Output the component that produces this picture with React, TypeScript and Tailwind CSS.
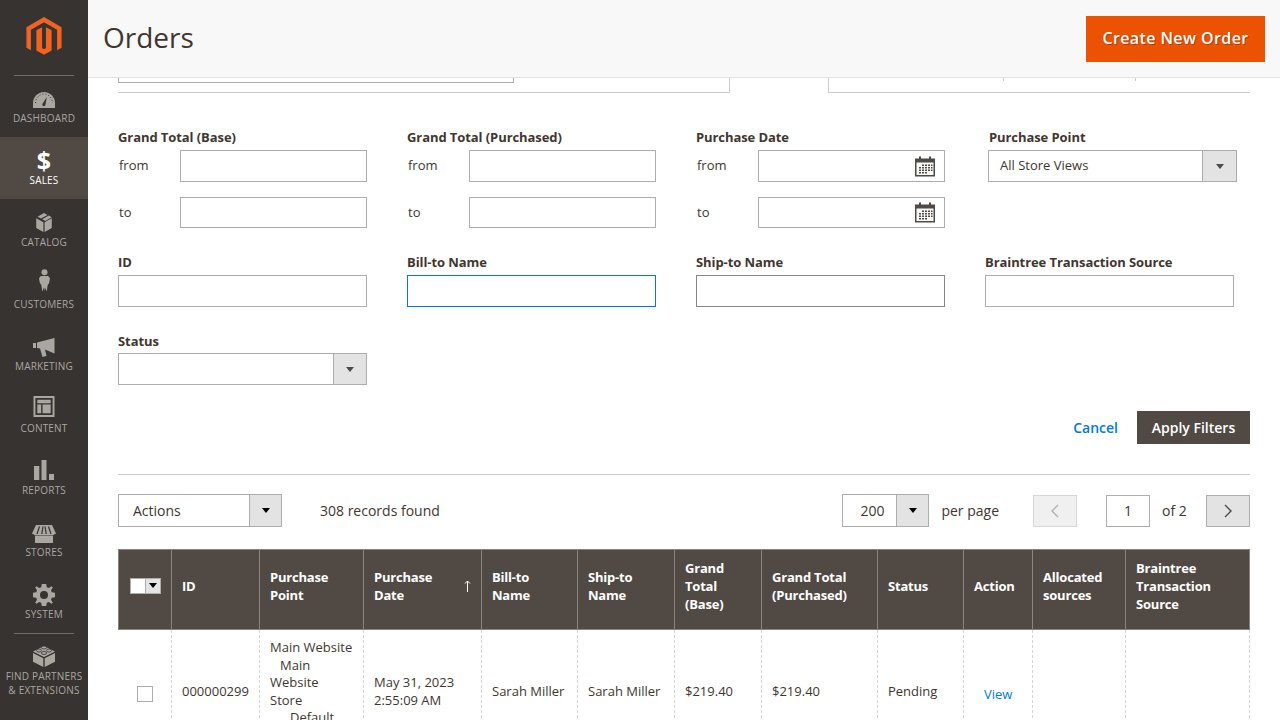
import React from "react";

const font = { fontFamily: '"Open Sans", sans-serif' };

const Logo = () => (
  <svg width="36" height="41" viewBox="0 0 36 42">
    <path
      fill="#f26322"
      d="M18 0 36 10.400V31.400L31.400 34V13L18 5.300 4.600 13V34L0 31.400V10.400ZM20 10.500 25.800 13.600V34.200L18 38.700 10.200 34.200V13.600L16 10.500V31.800L18 33 20 31.800Z"
    />
  </svg>
);

const navIcons: Record<string, React.ReactNode> = {
  DASHBOARD: (
    <svg width="22" height="16" viewBox="0 0 22 16">
      <path
        fill="currentColor"
        d="M11 0C4.800 0 0 5 0 11V16H22V11C22 5 17.200 0 11 0Z"
      />
      <path
        stroke="#373330"
        strokeWidth="1"
        strokeDasharray="1 2"
        fill="none"
        d="M2.500 11C2.500 6 6.500 2 11 2S19.500 6 19.500 11"
      />
      <path
        fill="#373330"
        d="M9.700 11.500 13.800 5 12.500 12.500A1.600 1.600 0 1 1 9.700 11.500Z"
      />
    </svg>
  ),
  SALES: (
    <span className="text-[25px] font-bold leading-[23px] text-white -mb-[2px]">
      $
    </span>
  ),
  CATALOG: (
    <svg width="18" height="19" viewBox="0 0 20 22" fill="currentColor">
      <path d="M10 0 14 2.200 6.500 6.500 2.500 4.300ZM15.500 3 19 5 11.500 9.200 8 7.300ZM1 6 9.300 10.700V22L1 17.300ZM19 6V17.300L10.700 22V10.700Z" />
    </svg>
  ),
  CUSTOMERS: (
    <svg
      width="11"
      height="23"
      viewBox="0 0 12 25"
      fill="currentColor"
      className="mb-[2px]"
    >
      <circle cx="6" cy="3.500" r="3.300" />
      <path d="M2 7.500H10L12 10 11 15.500 9.500 17 8.500 24.500 6.500 20 6 24.500 5.500 20 3.500 24.500 2.500 17 1 15.500 0 10Z" />
    </svg>
  ),
  MARKETING: (
    <svg
      width="22"
      height="19"
      viewBox="0 0 22 19"
      fill="currentColor"
      className="-mb-px"
    >
      <path d="M0 5H3V10H0ZM4 4.500 21.500 0V15.500L12 11.500 13.500 18 9.500 19 7 10.500 4 10Z" />
    </svg>
  ),
  CONTENT: (
    <svg
      width="22"
      height="21"
      viewBox="0 0 22 22"
      fill="currentColor"
      className="mb-px"
    >
      <path
        fillRule="evenodd"
        d="M0 0H22V22H0ZM2 2V20H20V2ZM4 4H18V7.500H4ZM4 9H8V18H4ZM9.500 9H18V18H9.500Z"
      />
    </svg>
  ),
  REPORTS: (
    <svg width="20" height="20" viewBox="0 0 20 20" fill="currentColor">
      <path d="M0 6H5.300V20H0ZM7.500 0H12.500V20H7.500ZM15 14H20V20H15Z" />
    </svg>
  ),
  STORES: (
    <svg width="24" height="18" viewBox="0 0 24 18" className="-mb-px">
      <path fill="currentColor" d="M4 0H20L24 8.500 21.500 10H2.500L0 8.500Z" />
      <path
        stroke="#373330"
        strokeWidth="1.200"
        fill="none"
        d="M7.500 1.500 5 9M11 1.500 9.800 9M13 1.500 14.200 9M16.500 1.500 19 9"
      />
      <path fill="currentColor" d="M3 10.500H21V18H3Z" />
    </svg>
  ),
  SYSTEM: (
    <svg
      width="22"
      height="22"
      viewBox="0 0 22 22"
      fill="currentColor"
      className="-mb-[2px]"
    >
      <path
        fillRule="evenodd"
        d="M8.800 0H13.200L13.800 3.200 15.800 4 18.500 2.200 19.800 3.500 18 6.200 18.800 8.200 22 8.800V13.200L18.800 13.800 18 15.800 19.800 18.500 18.500 19.800 15.800 18 13.800 18.800 13.200 22H8.800L8.200 18.800 6.200 18 3.500 19.800 2.200 18.500 4 15.800 3.200 13.800 0 13.200V8.800L3.200 8.200 4 6.200 2.200 3.500 3.500 2.200 6.200 4 8.200 3.200ZM11 7A4 4 0 1 0 11 15 4 4 0 1 0 11 7Z"
      />
    </svg>
  ),
  "FIND PARTNERS": (
    <svg width="22" height="22" viewBox="0 0 22 22">
      <path
        fill="currentColor"
        d="M11 1 22 6.500 11 12 0 6.500ZM0 8 10.300 13.200V22L0 16.800ZM22 8V16.800L11.700 22V13.200Z"
      />
      <g fill="currentColor" stroke="#373330" strokeWidth="0.800">
        <ellipse cx="11" cy="2.500" rx="2.600" ry="1.500" />
        <ellipse cx="6" cy="5.500" rx="2.600" ry="1.500" />
        <ellipse cx="16" cy="5.500" rx="2.600" ry="1.500" />
        <ellipse cx="11" cy="8" rx="2.600" ry="1.500" />
      </g>
    </svg>
  ),
};

const navItems = [
  "DASHBOARD",
  "SALES",
  "CATALOG",
  "CUSTOMERS",
  "MARKETING",
  "CONTENT",
  "REPORTS",
  "STORES",
  "SYSTEM",
];

const Caret = ({ dark }: { dark?: boolean }) => (
  <span
    className={
      dark
        ? "w-0 h-0 border-x-[4px] border-x-transparent border-t-[5px] border-t-[#000000]"
        : "w-0 h-0 border-x-[4px] border-x-transparent border-t-[5px] border-t-[#514943]"
    }
  />
);

const Select = ({
  width,
  btn = "w-[34px]",
  height = "h-[32px]",
  text,
  textClass = "pl-[11px]",
  dark,
}: {
  width: string;
  btn?: string;
  height?: string;
  text?: string;
  textClass?: string;
  dark?: boolean;
}) => (
  <div className={`${width} ${height} flex border border-[#adadad] bg-white`}>
    <div className={`flex-1 flex items-center text-[13px] text-[#41362f] ${textClass}`}>
      {text}
    </div>
    <div
      className={`${btn} flex items-center justify-center bg-[#e3e3e3] border-l border-[#adadad]`}
    >
      <Caret dark={dark} />
    </div>
  </div>
);

const Calendar = () => (
  <svg width="20" height="21" viewBox="0 0 20 20" className="shrink-0">
    <rect x="0" y="2" width="20" height="18" fill="#514943" />
    <rect x="1.500" y="6" width="17" height="12.500" fill="#f8f8f8" />
    <rect x="4" y="0" width="2" height="4" fill="#514943" />
    <rect x="14" y="0" width="2" height="4" fill="#514943" />
    <path
      fill="#514943"
      d="M7 8h2v1.500H7zM10 8h2v1.500h-2zM13 8h2v1.500h-2zM16 8h1.500v1.500H16zM4 10.500h2V12H4zM7 10.500h2V12H7zM10 10.500h2V12h-2zM13 10.500h2V12h-2zM16 10.500h1.500V12H16zM4 13h2v1.500H4zM7 13h2v1.500H7zM10 13h2v1.500h-2zM13 13h2v1.500h-2zM16 13h1.500v1.500H16zM4 15.500h2V17H4zM7 15.500h2V17H7zM10 15.500h2V17h-2z"
    />
  </svg>
);

const Label = ({ children }: { children: React.ReactNode }) => (
  <div className="text-[13px] leading-[18px] font-bold tracking-[-0.08px] text-[#41362f]">
    {children}
  </div>
);

const RangeRow = ({
  label,
  date,
  className = "",
  height,
}: {
  label: string;
  date?: boolean;
  className?: string;
  height: string;
}) => (
  <div className={`flex items-center ${className}`}>
    <span className="w-[62px] pl-px text-[13px] text-[#41362f]">{label}</span>
    <div
      className={`w-[187px] ${height} border border-[#adadad] bg-white flex items-center justify-end pr-[9px]`}
    >
      {date && <Calendar />}
    </div>
  </div>
);

const Range = ({ label, date }: { label: string; date?: boolean }) => (
  <div>
    <Label>{label}</Label>
    <RangeRow label="from" date={date} height="h-[32px]" className="mt-[4px]" />
    <RangeRow label="to" date={date} height="h-[31px]" className="mt-[15px]" />
  </div>
);

const TextField = ({
  label,
  border = "border-[#adadad]",
}: {
  label: string;
  border?: string;
}) => (
  <div>
    <Label>{label}</Label>
    <div className={`w-[249px] h-[32px] mt-[4px] border bg-white ${border}`} />
  </div>
);

const headers: [string, string][] = [
  ["", "w-[53px]"],
  ["ID", "w-[88px]"],
  ["Purchase Point", "w-[104px]"],
  ["Purchase Date", "w-[118px]"],
  ["Bill-to Name", "w-[96px]"],
  ["Ship-to Name", "w-[97px]"],
  ["Grand Total (Base)", "w-[87px]"],
  ["Grand Total (Purchased)", "w-[116px]"],
  ["Status", "w-[86px]"],
  ["Action", "w-[69px]"],
  ["Allocated sources", "w-[93px]"],
  ["Braintree Transaction Source", "w-[124px]"],
];

const cell =
  "border-x border-dashed border-[#d6d6d6] px-[10px] py-[9px] align-middle text-[13px] leading-[17.500px] text-[#41362f]";

const Chevron = ({ dir }: { dir: "left" | "right" }) => (
  <svg width="10" height="14" viewBox="0 0 10 14" fill="none">
    <path
      d={dir === "left" ? "M8 1 2 7 8 13" : "M2 1 8 7 2 13"}
      stroke="currentColor"
      strokeWidth="1.400"
    />
  </svg>
);

const App = () => {
  return (
    <div
      className="flex w-[1280px] h-[720px] overflow-hidden bg-white"
      style={font}
    >
      <aside className="w-[88px] shrink-0 bg-[#373330] flex flex-col items-center">
        <div className="h-[75px] w-full flex items-start justify-center pt-[17px]">
          <Logo />
        </div>
        <div className="w-[60px] h-px bg-[#736d69] mb-[-1px]" />
        {navItems.map((item) => (
          <div
            key={item}
            className={`w-full h-[62px] flex flex-col items-center justify-end pb-[12px] ${
              item === "SALES" ? "bg-[#514943] text-white" : "text-[#aaa6a0]"
            }`}
          >
            <div className="h-[26px] flex items-end justify-center">
              {navIcons[item]}
            </div>
            <div className="mt-[3px] text-[10px] leading-[14px] tracking-[0.2px]">
              {item}
            </div>
          </div>
        ))}
        <div className="w-[60px] h-px bg-[#736d69]" />
        <div className="w-full flex flex-col items-center pt-[11px] text-[#aaa6a0]">
          {navIcons["FIND PARTNERS"]}
          <div className="mt-[2px] text-[10px] leading-[14px] text-center tracking-[0.2px]">
            FIND PARTNERS
            <br />& EXTENSIONS
          </div>
        </div>
      </aside>

      <div className="flex-1 min-w-0 flex flex-col h-full">
        <header className="h-[78px] shrink-0 bg-[#f8f8f8] border-b border-[#e3e3e3] flex items-start justify-between pl-[15px] pr-[15px] pt-[15px]">
          <h1 className="text-[28px] leading-[44px] text-[#41362f]">Orders</h1>
          <button className="w-[179px] h-[46px] mt-px pb-[2px] bg-[#eb5202] text-white text-[16px] font-semibold tracking-[0.4px] [text-shadow:1px_1px_0_rgba(0,0,0,0.25)]">
            Create New Order
          </button>
        </header>

        <main className="flex-1 min-h-0 overflow-hidden px-[30px]">
          <div className="flex h-[15px] items-start">
            <div className="w-[612px] h-[15px] border-b border-r border-[#ccc]">
              <div className="w-[396px] h-[5px] border-b border-x border-[#adadad]" />
            </div>
            <div className="w-[98px]" />
            <div className="flex-1 h-[15px] border-b border-l border-[#ccc] flex">
              <div className="w-[175px] h-[3px] border-r border-[#ccc]" />
              <div className="w-[132px] h-[3px] border-r border-[#ccc]" />
            </div>
          </div>

          <div className="grid grid-cols-[289px_289px_289px_1fr] pt-[35px]">
            <Range label="Grand Total (Base)" />
            <Range label="Grand Total (Purchased)" />
            <Range label="Purchase Date" date />
            <div className="pl-[3px]">
              <div className="pl-px">
                <Label>Purchase Point</Label>
              </div>
              <div className="mt-[4px]">
                <Select
                  width="w-[249px]"
                  text="All Store Views"
                  textClass="pl-[11px]"
                />
              </div>
            </div>
          </div>

          <div className="grid grid-cols-[289px_289px_289px_1fr] mt-[25px]">
            <TextField label="ID" />
            <TextField label="Bill-to Name" border="border-[#007bdb]" />
            <TextField label="Ship-to Name" border="border-[#878787]" />
            <TextField label="Braintree Transaction Source" />
          </div>

          <div className="mt-[25px]">
            <Label>Status</Label>
            <div className="mt-[3px]">
              <Select width="w-[249px]" btn="w-[33px]" />
            </div>
          </div>

          <div className="flex justify-end items-center gap-[19px] mt-[26px]">
            <span className="text-[14px] font-semibold text-[#007bdb]">
              Cancel
            </span>
            <button className="w-[113px] h-[33px] bg-[#514943] text-white text-[14px] font-semibold">
              Apply Filters
            </button>
          </div>

          <div className="h-px bg-[#cccccc] mt-[30px]" />

          <div className="flex items-center h-[33px] mt-[19px] text-[14px] text-[#41362f]">
            <Select
              width="w-[164px]"
              height="h-[33px]"
              btn="w-[32px]"
              text="Actions"
              textClass="pl-[14px] !text-[14px]"
              dark
            />
            <span className="ml-[38px]">308 records found</span>
            <div className="ml-auto flex items-center">
              <Select
                width="w-[87px]"
                height="h-[33px]"
                btn="w-[32px]"
                text="200"
                textClass="justify-end pr-[12px] !text-[14px]"
                dark
              />
              <span className="ml-[12px]">per page</span>
              <div className="ml-[34px] w-[44px] h-[32px] bg-[#f0f0f0] border border-[#d6d6d6] flex items-center justify-center text-[#b5b0ab]">
                <Chevron dir="left" />
              </div>
              <div className="ml-[29px] w-[44px] h-[32px] border border-[#adadad] flex items-center justify-center">
                1
              </div>
              <span className="ml-[12px] w-[44px]">of 2</span>
              <div className="w-[44px] h-[32px] bg-[#e3e3e3] border border-[#adadad] flex items-center justify-center text-[#514943]">
                <Chevron dir="right" />
              </div>
            </div>
          </div>

          <table className="mt-[22px] w-[1131px] table-fixed border-collapse">
            <colgroup>
              {headers.map(([h, w]) => (
                <col key={h || "select"} className={w} />
              ))}
            </colgroup>
            <thead>
              <tr className="h-[80px] bg-[#514943] text-white">
                {headers.map(([h], i) => (
                  <th
                    key={h || "select"}
                    className="border border-[#8a837f] px-[10px] pb-[8px] text-left align-middle text-[13px] leading-[18px] font-bold tracking-[-0.2px]"
                  >
                    {i === 0 ? (
                      <div className="flex h-[16px] w-[31px] ml-px border border-[#adadad] bg-white">
                        <div className="flex-1" />
                        <div className="w-[15px] bg-[#e3e3e3] border-l border-[#adadad] flex items-center justify-center">
                          <Caret dark />
                        </div>
                      </div>
                    ) : h === "Purchase Date" ? (
                      <div className="flex items-center justify-between">
                        <span className="w-[60px]">{h}</span>
                        <svg width="7" height="12" viewBox="0 0 7 12" fill="none">
                          <path
                            d="M3.500 12V1M1 3.500 3.500 1 6 3.500"
                            stroke="#ffffff"
                            strokeWidth="1"
                          />
                        </svg>
                      </div>
                    ) : (
                      h
                    )}
                  </th>
                ))}
              </tr>
            </thead>
            <tbody>
              <tr>
                <td className={`${cell} border-l-0`}>
                  <div className="w-[16px] h-[16px] mt-[5px] ml-[8px] border border-[#adadad] bg-white" />
                </td>
                <td className={cell}>000000299</td>
                <td className={cell}>
                  Main Website
                  <br />
                  <span className="pl-[10px]">Main</span>
                  <br />
                  Website
                  <br />
                  Store
                  <br />
                  <span className="pl-[20px]">Default</span>
                  <br />
                  Store View
                </td>
                <td className={cell}>
                  May 31, 2023
                  <br />
                  2:55:09 AM
                </td>
                <td className={cell}>Sarah Miller</td>
                <td className={cell}>Sarah Miller</td>
                <td className={cell}>$219.40</td>
                <td className={cell}>$219.40</td>
                <td className={cell}>Pending</td>
                <td className={cell}>
                  <span className="block ml-[10px] mt-[6px] text-[#007bdb]">
                    View
                  </span>
                </td>
                <td className={cell} />
                <td className={cell} />
              </tr>
            </tbody>
          </table>
        </main>
      </div>
    </div>
  );
};

export default App;
